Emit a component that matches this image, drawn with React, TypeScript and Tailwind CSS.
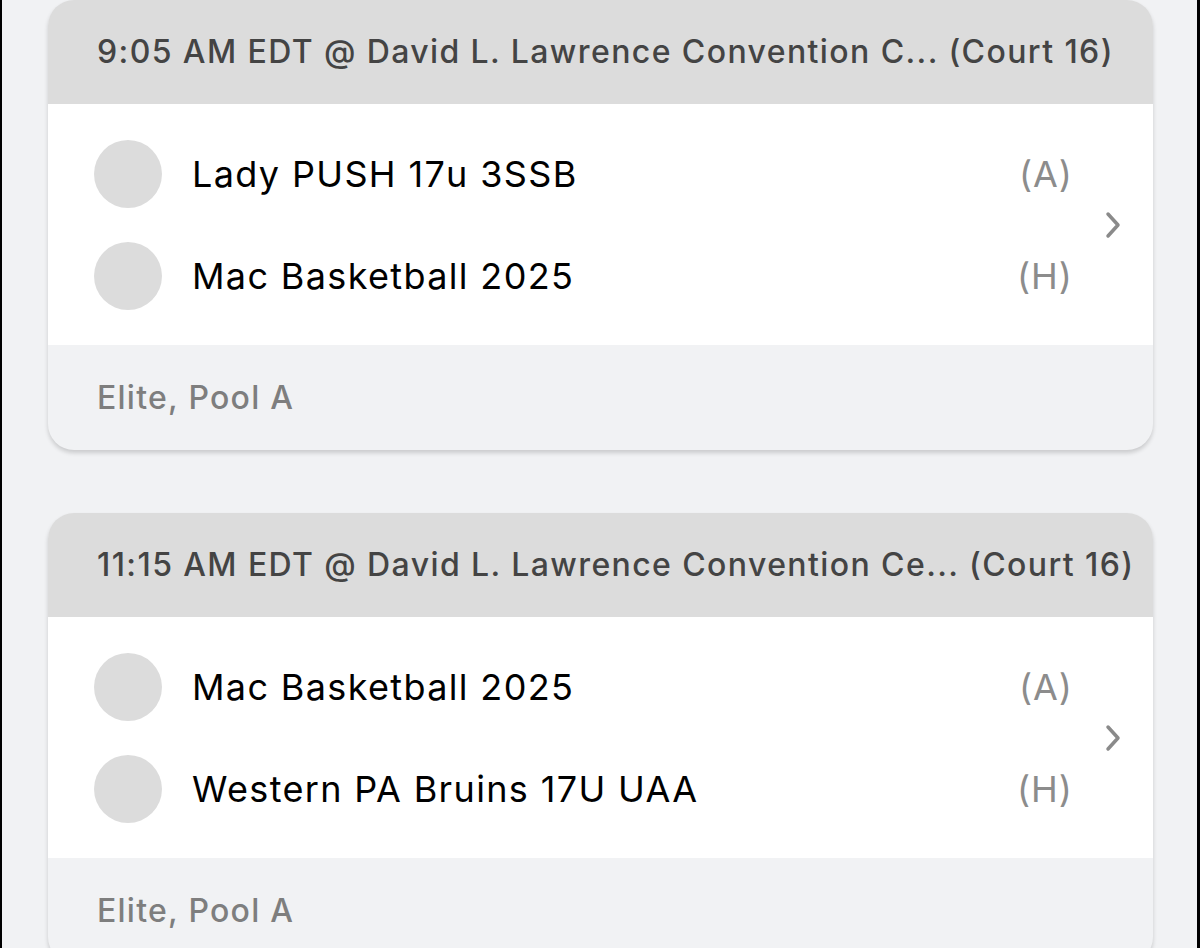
import React from "react";

interface Game {
  header: string;
  teams: { name: string; side: string }[];
  pool: string;
}

const games: Game[] = [
  {
    header: "9:05 AM EDT @ David L. Lawrence Convention C... (Court 16)",
    teams: [
      { name: "Lady PUSH 17u 3SSB", side: "(A)" },
      { name: "Mac Basketball 2025", side: "(H)" },
    ],
    pool: "Elite, Pool A",
  },
  {
    header: "11:15 AM EDT @ David L. Lawrence Convention Ce... (Court 16)",
    teams: [
      { name: "Mac Basketball 2025", side: "(A)" },
      { name: "Western PA Bruins 17U UAA", side: "(H)" },
    ],
    pool: "Elite, Pool A",
  },
];

const GameCard = ({ game }: { game: Game }) => {
  return (
    <div className="rounded-[26px] overflow-hidden bg-[#f1f2f4] shadow-[0_3px_4px_rgba(0,0,0,0.16)]">
      <div className="h-[104px] bg-[#dcdcdc] flex items-center pl-[49px] text-[32px] font-medium tracking-[1.4px] text-[#444444] whitespace-nowrap">
        {game.header}
      </div>
      <div className="bg-white h-[241px] flex items-center">
        <div className="flex-1 flex flex-col gap-[34px] pl-[46px]">
          {game.teams.map((t) => (
            <div key={t.name} className="flex items-center h-[68px]">
              <div className="w-[68px] h-[68px] rounded-full bg-[#dcdcdc]" />
              <div className="ml-[30px] flex-1 text-[36px] tracking-[1.35px] text-black">{t.name}</div>
              <div className="text-[36px] tracking-[1px] text-[#8c8c8c] w-[70px] text-right">{t.side}</div>
            </div>
          ))}
        </div>
        <div className="w-[80px] flex justify-center">
          <svg width="22" height="30" viewBox="0 0 22 30" fill="none">
            <polyline
              points="6,4 16,15 6,26"
              stroke="#8a8a8a"
              strokeWidth="3.5"
              strokeLinecap="round"
              strokeLinejoin="round"
            />
          </svg>
        </div>
      </div>
      <div className="h-[105px] flex items-center pl-[49px] text-[32px] font-medium tracking-[1.25px] text-[#7e7e7e]">
        {game.pool}
      </div>
    </div>
  );
};

export default function App() {
  return (
    <div
      className="w-[1200px] h-[948px] overflow-hidden bg-[#f1f2f4] border-l-2 border-r-[3px] border-black"
      style={{ fontFamily: "Inter, 'Noto Sans', sans-serif" }}
    >
      <div className="pl-[46px] pr-[44px] flex flex-col gap-[63px]">
        {games.map((g, i) => (
          <GameCard key={i} game={g} />
        ))}
      </div>
    </div>
  );
}
